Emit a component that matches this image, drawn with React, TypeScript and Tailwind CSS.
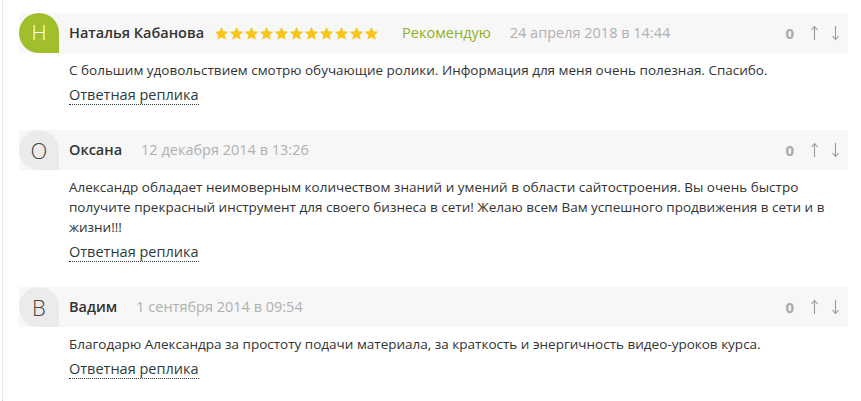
import React from "react"

type Review = {
    letter: string
    name: string
    date: string
    text: string
    stars?: number
    recommend?: boolean
    accent?: boolean
}

const reviews: Review[] = [
    {
        letter: "Н",
        name: "Наталья Кабанова",
        date: "24 апреля 2018 в 14:44",
        text: "С большим удовольствием смотрю обучающие ролики. Информация для меня очень полезная. Спасибо.",
        stars: 11,
        recommend: true,
        accent: true,
    },
    {
        letter: "О",
        name: "Оксана",
        date: "12 декабря 2014 в 13:26",
        text: "Александр обладает неимоверным количеством знаний и умений в области сайтостроения. Вы очень быстро получите прекрасный инструмент для своего бизнеса в сети! Желаю всем Вам успешного продвижения в сети и в жизни!!!",
    },
    {
        letter: "В",
        name: "Вадим",
        date: "1 сентября 2014 в 09:54",
        text: "Благодарю Александра за простоту подачи материала, за краткость и энергичность видео-уроков курса.",
    },
]

const Star = () => (
    <svg width="15" height="15" viewBox="0 0 24 24" className="shrink-0">
        <path d="M12 1.5l3.2 7 7.6.8-5.7 5.1 1.6 7.5L12 18l-6.7 3.9 1.6-7.5L1.2 9.3l7.6-.8z" fill="#f8c51c" />
    </svg>
)

const Arrow = ({ down }: { down?: boolean }) => (
    <svg width="9" height="16" viewBox="0 0 9 16" className={down ? "rotate-180" : ""}>
        <path d="M4.5 15V1.5M1.5 5L4.5 1.5 7.5 5" fill="none" stroke="#999" strokeWidth="1.1" />
    </svg>
)

const Comment = ({ r }: { r: Review }) => (
    <div className="mb-[24px]">
        <div className="flex items-center h-10 bg-[#f7f7f7]">
            <div
                className={
                    r.accent
                        ? "w-10 h-10 shrink-0 flex items-center justify-center rounded-t-full rounded-bl-full bg-[#a1be2b] text-white text-[21px] font-light"
                        : "w-10 h-10 shrink-0 flex items-center justify-center rounded-t-full rounded-bl-full bg-[#ebebeb] text-[#444] text-[22px] font-light"
                }
            >
                {r.letter}
            </div>
            <span className="ml-[10px] text-[14.5px] font-semibold text-[#333]">{r.name}</span>
            {r.stars ? (
                <div className="flex ml-[10px]">
                    {Array.from({ length: r.stars }).map((_, i) => (
                        <Star key={i} />
                    ))}
                </div>
            ) : null}
            {r.recommend ? <span className="ml-[23px] text-[14.5px] text-[#8fb21f]">Рекомендую</span> : null}
            <span className="ml-[19px] text-[14.5px] text-[#b0b0b0]">{r.date}</span>
            <div className="ml-auto mr-[8px] flex items-center">
                <span className="text-[15px] font-bold text-[#aaa]">0</span>
                <span className="ml-[16px]"><Arrow /></span>
                <span className="ml-[12px]"><Arrow down /></span>
            </div>
        </div>
        <div className="pl-[50px] pr-[12px] pt-[7px]">
            <p className="text-[13.5px] leading-[20px] text-[#333]">{r.text}</p>
            <a className="inline-block mt-[5px] text-[14.5px] leading-[19px] text-[#2c3b3c] border-b border-dotted border-[#2c3b3c]">
                Ответная реплика
            </a>
        </div>
    </div>
)

const App = () => {
    return (
        <div className="w-[861px] h-[401px] bg-white overflow-hidden font-['Open_Sans',sans-serif]">
            <div className="ml-[2px] h-full border-l border-dotted border-[#cfcfcf] pl-[16px] pr-[13px] pt-[13px]">
                {reviews.map((r) => (
                    <Comment key={r.name} r={r} />
                ))}
            </div>
        </div>
    )
}

export default App
